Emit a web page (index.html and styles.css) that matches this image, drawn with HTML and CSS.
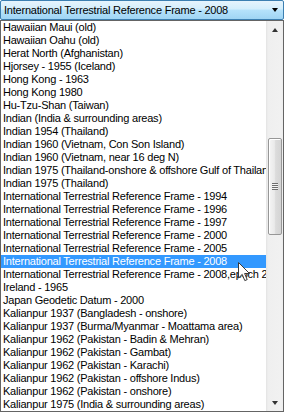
FILE: index.html
```html
<!DOCTYPE html>
<html lang="en">

<head>
    <meta charset="UTF-8">
    <meta name="viewport" content="width=device-width, initial-scale=1.0">
    <title>Datum list</title>
    <link rel="stylesheet" href="styles.css">
</head>

<body>
    <div class="picker">
        <div class="combo">
            <span class="combo-text">International Terrestrial Reference Frame - 2008</span>
            <span class="combo-arrow"></span>
        </div>
        <div class="dropdown">
            <ul class="items">
                <li>Hawaiian Maui (old)</li>
                <li>Hawaiian Oahu (old)</li>
                <li>Herat North (Afghanistan)</li>
                <li>Hjorsey - 1955 (Iceland)</li>
                <li>Hong Kong - 1963</li>
                <li>Hong Kong 1980</li>
                <li>Hu-Tzu-Shan (Taiwan)</li>
                <li>Indian (India &amp; surrounding areas)</li>
                <li>Indian 1954 (Thailand)</li>
                <li>Indian 1960 (Vietnam, Con Son Island)</li>
                <li>Indian 1960 (Vietnam, near 16 deg N)</li>
                <li>Indian 1975 (Thailand-onshore &amp; offshore Gulf of Thailand)</li>
                <li>Indian 1975 (Thailand)</li>
                <li>International Terrestrial Reference Frame - 1994</li>
                <li>International Terrestrial Reference Frame - 1996</li>
                <li>International Terrestrial Reference Frame - 1997</li>
                <li>International Terrestrial Reference Frame - 2000</li>
                <li>International Terrestrial Reference Frame - 2005</li>
                <li class="selected">International Terrestrial Reference Frame - 2008</li>
                <li>International Terrestrial Reference Frame - 2008,epoch 2005</li>
                <li>Ireland - 1965</li>
                <li>Japan Geodetic Datum - 2000</li>
                <li>Kalianpur 1937 (Bangladesh - onshore)</li>
                <li>Kalianpur 1937 (Burma/Myanmar - Moattama area)</li>
                <li>Kalianpur 1962 (Pakistan - Badin &amp; Mehran)</li>
                <li>Kalianpur 1962 (Pakistan - Gambat)</li>
                <li>Kalianpur 1962 (Pakistan - Karachi)</li>
                <li>Kalianpur 1962 (Pakistan - offshore Indus)</li>
                <li>Kalianpur 1962 (Pakistan - onshore)</li>
                <li>Kalianpur 1975 (India &amp; surrounding areas)</li>
            </ul>
            <div class="scrollbar">
                <div class="scroll-btn"><span class="tri-up"></span></div>
                <div class="track">
                    <div class="thumb">
                        <span class="grip"></span>
                    </div>
                </div>
                <div class="scroll-btn"><span class="tri-down"></span></div>
            </div>
        </div>

        <!-- mouse pointer over the selected row -->
        <svg class="cursor" width="13" height="20" viewBox="0 0 13 20">
            <path d="M0.5 0.5 L0.5 16 L4.2 12.4 L6.8 18.6 L9.2 17.6 L6.6 11.5 L11.5 11.5 Z"
                fill="#ffffff" stroke="#3a3a3a" stroke-width="1" stroke-linejoin="round" />
        </svg>
    </div>
</body>

</html>
```

FILE: styles.css
```css
body {
    margin: 0;
    background: #ffffff;
    font-family: 'Liberation Sans', Arial, sans-serif;
    font-size: 11px;
    letter-spacing: -0.22px;
    color: #000000;
}

.picker {
    position: relative;
    width: 284px;
    height: 412px;
}

/* combobox head (hot state) */
.combo {
    height: 18px;
    border: 1px solid #3c7fb1;
    border-radius: 2px;
    background: linear-gradient(to bottom, #e6f4fd 0%, #d3eefc 45%, #b6e2fb 50%, #9fd5f4 100%);
    display: flex;
    align-items: center;
    padding: 0 5px 0 3px;
    box-sizing: content-box;
    width: 274px;
}

.combo-text {
    flex: 1;
    white-space: nowrap;
    line-height: 13px;
    padding-top: 1px;
}

.combo-arrow {
    width: 0;
    height: 0;
    border-left: 3.5px solid transparent;
    border-right: 3.5px solid transparent;
    border-top: 4px solid #000000;
}

/* open list */
.dropdown {
    display: flex;
    border: 1px solid #646464;
    height: 390px;
}

.items {
    list-style: none;
    margin: 0;
    padding: 0;
    width: 265px;
    overflow: hidden;
}

.items li {
    height: 13px;
    line-height: 13px;
    padding-left: 2px;
    white-space: nowrap;
    overflow: hidden;
}

.items li.selected {
    background: #3399ff;
    color: #ffffff;
}

/* vertical scrollbar */
.scrollbar {
    width: 17px;
    display: flex;
    flex-direction: column;
    background: linear-gradient(to right, #e3e3e3 0px, #efefef 2px, #f1f1f1 14px, #ededed 17px);
}

.scroll-btn {
    height: 17px;
    display: flex;
    align-items: center;
    justify-content: center;
}

.tri-up,
.tri-down {
    width: 0;
    height: 0;
    border-left: 3.5px solid transparent;
    border-right: 3.5px solid transparent;
}

.tri-up {
    border-bottom: 4px solid #333333;
    margin-top: 1px;
}

.tri-down {
    border-top: 4px solid #333333;
}

.track {
    flex: 1;
}

.thumb {
    margin: 100px 1px 0 2px;
    height: 95px;
    border: 1px solid #979797;
    border-radius: 2px;
    background: linear-gradient(to right, #f5f5f5 0%, #eaeaea 45%, #dcdcdc 55%, #d4d4d4 100%);
    box-shadow: inset 1px 1px 0 #ffffff;
    display: flex;
    align-items: center;
    justify-content: center;
}

.grip {
    width: 6px;
    height: 7px;
    background: repeating-linear-gradient(to bottom, #6e6e6e 0px, #6e6e6e 1px, #f4f4f4 1px, #f4f4f4 2px);
}

.cursor {
    position: absolute;
    left: 238px;
    top: 262px;
}
```
